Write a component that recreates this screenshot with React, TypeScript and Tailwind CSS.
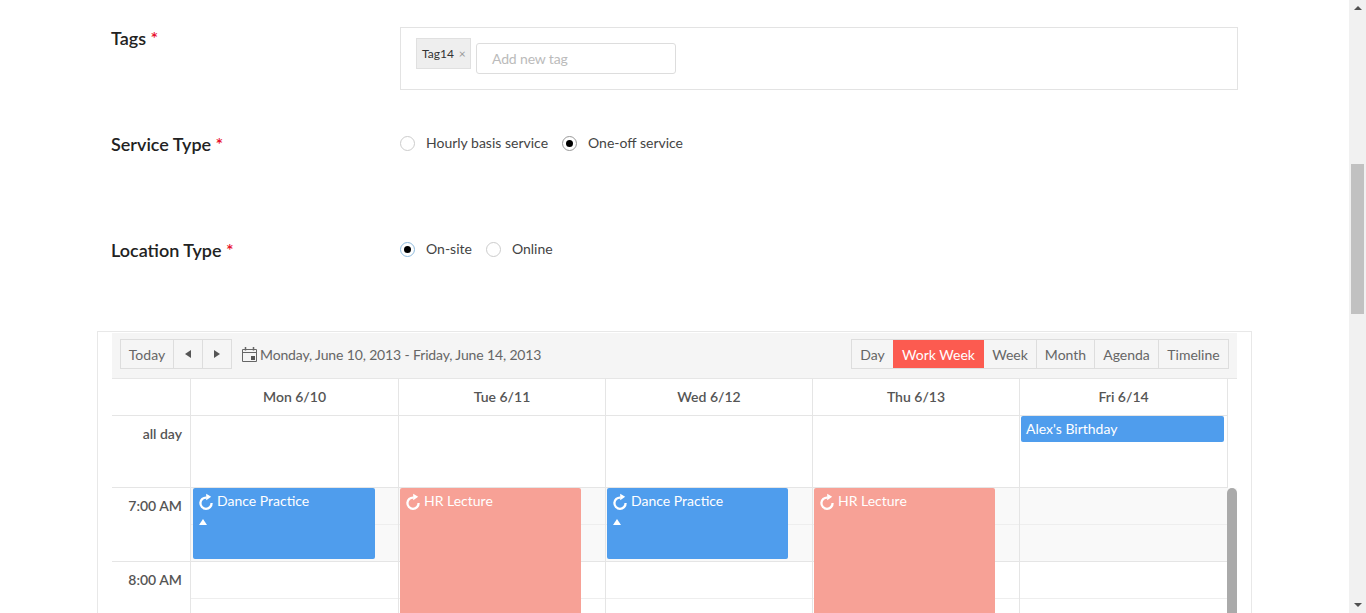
import React from "react";

const Label = ({ text, h }: { text: string; h: string }) => (
  <div className={`w-[289px] shrink-0 text-[18px] leading-[22px] font-semibold text-[#222] ${h}`}>
    <span>{text}</span> <span className="text-[#e8112d]">*</span>
  </div>
);

const Radio = ({ on, label, focus }: { on?: boolean; label: string; focus?: boolean }) => (
  <label className="flex items-center gap-[11px] text-[14px] leading-5 text-[#444]">
    <span
      className={`flex h-[15px] w-[15px] items-center justify-center rounded-full border bg-white ${
        focus ? "border-[#8db9dc]" : on ? "border-[#999]" : "border-[#ccc]"
      }`}
    >
      {on && <span className="h-[7px] w-[7px] rounded-full bg-black" />}
    </span>
    {label}
  </label>
);

const Refresh = () => (
  <svg width="16" height="17" viewBox="0 0 16 17" fill="none" className="shrink-0">
    <path d="M8.5 4.6A5.6 5.6 0 1 0 13.6 10" stroke="white" strokeWidth="2.3" fill="none" />
    <path d="M8.2 0.8 L13.2 3.8 L8.2 7.2 Z" fill="white" />
  </svg>
);

const Ev = ({ title, color, left, width, height, arrow }: { title: string; color: string; left: string; width: string; height: string; arrow?: boolean }) => (
  <div className={`absolute top-0 ${left} ${width} ${height} ${color} rounded-[2px] pl-[5px] pt-[3px] text-[14px] leading-5 text-white`}>
    <div className="flex items-start gap-[3px]">
      <span className="mt-[2px]">
        <Refresh />
      </span>
      {title}
    </div>
    {arrow && <div className="ml-[1px] mt-[8px] h-0 w-0 border-x-[4px] border-b-[6px] border-x-transparent border-b-white" />}
  </div>
);

const days = [
  { name: "Mon 6/10", w: "w-[208px]" },
  { name: "Tue 6/11", w: "w-[207px]" },
  { name: "Wed 6/12", w: "w-[207px]" },
  { name: "Thu 6/13", w: "w-[207px]" },
  { name: "Fri 6/14", w: "w-[208px]" },
];

const TimeRow = ({ label, shaded, h2 }: { label: string; shaded?: boolean; h2: string }) => (
  <div className="flex h-[74px] border-b border-[#e5e5e5]">
    <div className="w-[78px] shrink-0 pr-2 pt-[8px] text-right text-[14px] font-semibold leading-5 text-[#555]">
      {label}
    </div>
    <div className="flex-1">
      <div className={`h-[37px] border-b border-[#eeeeee] ${shaded ? "bg-[#f9f9f9]" : "bg-white"}`} />
      <div className={`${h2} ${shaded ? "bg-[#f9f9f9]" : "bg-white"}`} />
    </div>
  </div>
);

export default function App() {
  return (
    <div className="flex h-[613px] overflow-hidden bg-white font-['Lato',sans-serif]">
      <main className="min-w-0 flex-1">
        <div className="pl-[111px] pt-[27px]">
          <div className="flex h-[106px]">
            <Label text="Tags" h="pt-0" />
            <div className="flex h-[63px] w-[838px] items-start gap-[5px] border border-[#e3e3e3] pl-[15px] pt-[10px]">
              <div className="flex h-[31px] w-[55px] items-center border border-[#e0e0e0] bg-[#eeeeee] pl-[5px] text-[12px] text-[#333]">
                Tag14<span className="ml-[5px] text-[12px] text-[#999]">×</span>
              </div>
              <div className="mt-[5px] flex h-[31px] w-[200px] items-center rounded-[3px] border border-[#dddddd] pl-[15px] text-[14px] tracking-[-0.15px] text-[#bbbbbb]">
                Add new tag
              </div>
            </div>
          </div>
          <div className="flex h-[106px]">
            <Label text="Service Type" h="" />
            <div className="flex h-5 items-center gap-[14px] pt-0">
              <Radio label="Hourly basis service" />
              <Radio on label="One-off service" />
            </div>
          </div>
          <div className="flex h-[92px]">
            <Label text="Location Type" h="" />
            <div className="flex h-5 items-center gap-[14px]">
              <Radio on focus label="On-site" />
              <Radio label="Online" />
            </div>
          </div>
        </div>

        <section className="ml-[97px] w-[1155px] border border-b-0 border-[#e8e8e8] px-[14px] pt-[1px]">
          <div className="flex h-[46px] items-start justify-between border-b border-[#e6e6e6] bg-[#f5f5f5] px-[8px] pt-[6px] text-[14px] text-[#666]">
            <div className="flex items-center">
              <div className="flex h-[30px] border border-[#dddddd] bg-[#f5f5f5]">
                <span className="flex w-[53px] items-center justify-center border-r border-[#dddddd]">Today</span>
                <span className="flex w-[29px] items-center justify-center border-r border-[#dddddd]">
                  <span className="h-0 w-0 border-y-[4px] border-r-[6px] border-y-transparent border-r-[#555]" />
                </span>
                <span className="flex w-[28px] items-center justify-center">
                  <span className="h-0 w-0 border-y-[4px] border-l-[6px] border-y-transparent border-l-[#555]" />
                </span>
              </div>
              <svg width="15" height="15" viewBox="0 0 15 15" className="ml-[10px] mr-[3px]" fill="none">
                <path d="M0.5 2.5h14V14.5H0.5z M0.5 5.5h14" stroke="#666" strokeWidth="1" />
                <path d="M3.5 0v3.5M11.5 0v3.5" stroke="#666" strokeWidth="1.5" />
                <rect x="9" y="9" width="4" height="4" fill="#555" />
              </svg>
              <span className="tracking-[-0.14px]">Monday, June 10, 2013 - Friday, June 14, 2013</span>
            </div>
            <div className="flex h-[30px] border border-[#dddddd]">
              <span className="flex w-[41px] items-center justify-center">Day</span>
              <span className="flex w-[91px] items-center justify-center bg-[#fc5b50] text-white">Work Week</span>
              <span className="flex w-[53px] items-center justify-center border-r border-[#dddddd]">Week</span>
              <span className="flex w-[58px] items-center justify-center border-r border-[#dddddd]">Month</span>
              <span className="flex w-[64px] items-center justify-center border-r border-[#dddddd]">Agenda</span>
              <span className="flex w-[69px] items-center justify-center">Timeline</span>
            </div>
          </div>

          <div className="relative h-[235px] overflow-hidden">
            <div className="flex h-[37px] w-[1116px] border-b border-[#e5e5e5] text-[14px] font-semibold leading-[36px] text-[#555]">
              <div className="w-[78px] shrink-0" />
              {days.map((d) => (
                <div key={d.name} className={`${d.w} shrink-0 border-l border-[#e5e5e5] text-center`}>
                  {d.name}
                </div>
              ))}
              <div className="border-l border-[#e5e5e5]" />
            </div>
            <div className="flex h-[72px] w-[1116px] border-b border-[#e5e5e5]">
              <div className="w-[78px] shrink-0 pr-2 pt-2 text-right text-[14px] font-semibold leading-5 text-[#555]">all day</div>
              <div className="w-[208px] shrink-0 border-l border-[#e5e5e5]" />
              <div className="w-[207px] shrink-0 border-l border-[#e5e5e5]" />
              <div className="w-[207px] shrink-0 border-l border-[#e5e5e5]" />
              <div className="w-[207px] shrink-0 border-l border-[#e5e5e5]" />
              <div className="w-[209px] shrink-0 border-x border-[#e5e5e5] pl-[1px]">
                <div className="h-[26px] w-[203px] rounded-[2px] bg-[#4f9ded] pl-[5px] text-[14px] leading-[26px] text-white">
                  Alex's Birthday
                </div>
              </div>
            </div>
            <div className="relative">
              <TimeRow label="7:00 AM" shaded h2="h-[36px]" />
              <TimeRow label="8:00 AM" h2="h-[36px]" />
              {/* Day column lines and events laid over the time slots */}
              <div className="absolute inset-0 left-[78px] flex">
                {days.map((d, i) => (
                  <div key={d.name} className={`${d.w} relative h-full shrink-0 border-l border-[#e5e5e5]`}>
                    {i === 0 && <Ev title="Dance Practice" color="bg-[#4f9ded]" left="left-[2px]" width="w-[182px]" height="h-[71px]" arrow />}
                    {i === 1 && <Ev title="HR Lecture" color="bg-[#f7a196]" left="left-[1px]" width="w-[181px]" height="h-[200px]" />}
                    {i === 2 && <Ev title="Dance Practice" color="bg-[#4f9ded]" left="left-[1px]" width="w-[181px]" height="h-[71px]" arrow />}
                    {i === 3 && <Ev title="HR Lecture" color="bg-[#f7a196]" left="left-[1px]" width="w-[181px]" height="h-[200px]" />}
                  </div>
                ))}
                <div className="relative h-full w-[10px]">
                  <div className="absolute left-0 top-0 h-[200px] w-[10px] rounded-[5px] bg-[#aaaaaa]" />
                </div>
              </div>
            </div>
          </div>
        </section>
      </main>

      {/* page scrollbar */}
      <aside className="relative w-[17px] shrink-0 bg-[#f1f1f1]">
        <div className="absolute left-[5px] top-[6px] h-0 w-0 border-x-[4px] border-b-[4px] border-x-transparent border-b-[#505050]" />
        <div className="absolute left-[2px] top-[164px] h-[150px] w-[13px] bg-[#c1c1c1]" />
        <div className="absolute bottom-[6px] left-[5px] h-0 w-0 border-x-[4px] border-t-[4px] border-x-transparent border-t-[#505050]" />
      </aside>
    </div>
  );
}
